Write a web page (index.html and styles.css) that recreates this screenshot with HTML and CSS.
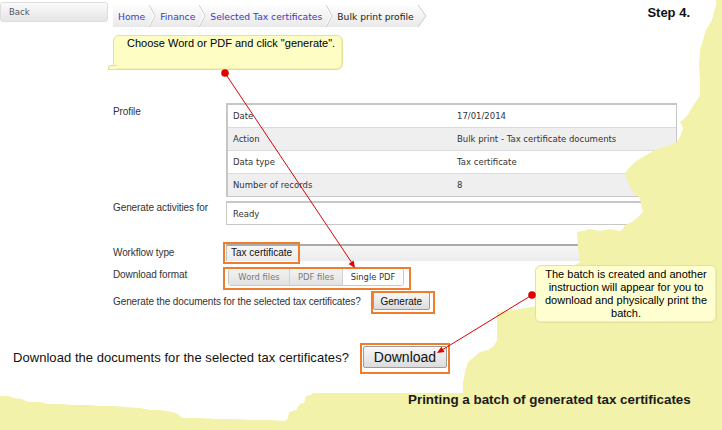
FILE: index.html
```html
<!DOCTYPE html>
<html lang="en">
<head>
<meta charset="utf-8">
<title>Bulk print profile</title>
<link rel="stylesheet" href="styles.css">
</head>
<body>
<div class="page">
  <header class="topbar">
    <button class="back" type="button">Back</button>
    <nav class="crumbs">
      <a class="crumb link">Home</a>
      <svg class="sep" width="7" height="22" viewBox="0 0 7 22"><polyline points="0,0 6,11 0,22" fill="none" stroke="#c9c9c9" stroke-width="1"/><polyline points="-1,0 5,11 -1,22" fill="none" stroke="#ffffff" stroke-width="1"/></svg>
      <a class="crumb link">Finance</a>
      <svg class="sep" width="7" height="22" viewBox="0 0 7 22"><polyline points="0,0 6,11 0,22" fill="none" stroke="#c9c9c9" stroke-width="1"/><polyline points="-1,0 5,11 -1,22" fill="none" stroke="#ffffff" stroke-width="1"/></svg>
      <a class="crumb link">Selected Tax certificates</a>
      <svg class="sep" width="7" height="22" viewBox="0 0 7 22"><polyline points="0,0 6,11 0,22" fill="none" stroke="#c9c9c9" stroke-width="1"/><polyline points="-1,0 5,11 -1,22" fill="none" stroke="#ffffff" stroke-width="1"/></svg>
      <span class="crumb current">Bulk print profile</span>
    </nav>
    <svg class="crumb-end" width="9" height="22" viewBox="0 0 9 22">
      <defs><linearGradient id="cg" x1="0" y1="0" x2="0" y2="1"><stop offset="0" stop-color="#fdfdfd"/><stop offset="1" stop-color="#e9e9e9"/></linearGradient></defs>
      <polygon points="0,0 8,11 0,22" fill="url(#cg)"/>
      <polyline points="0,0 8,11 0,22" fill="none" stroke="#c9c9c9" stroke-width="1"/>
    </svg>
    <div class="step">Step 4.</div>
  </header>

  <section class="form">
    <div class="row">
      <div class="label pad2">Profile</div>
      <div class="profile">
        <div class="prow"><span>Date</span><span>17/01/2014</span></div>
        <div class="prow alt"><span>Action</span><span>Bulk print - Tax certificate documents</span></div>
        <div class="prow"><span>Data type</span><span>Tax certificate</span></div>
        <div class="prow alt last"><span>Number of records</span><span>8</span></div>
      </div>
    </div>
    <div class="row activities">
      <div class="label">Generate activities for</div>
      <div class="box">Ready</div>
    </div>
    <div class="row workflow">
      <div class="label pad2">Workflow type</div>
      <div class="field">Tax certificate</div>
    </div>
    <div class="row format">
      <div class="label">Download format</div>
      <div class="seg">
        <span class="seg-item w1">Word files</span>
        <span class="seg-item w2">PDF files</span>
        <span class="seg-item w3 on">Single PDF</span>
      </div>
    </div>
    <div class="gen-row">
      <span class="label">Generate the documents for the selected tax certificates?</span>
      <button class="btn gen" type="button">Generate</button>
    </div>
  </section>

  <div class="download-row">
    <span class="dl-text">Download the documents for the selected tax certificates?</span>
    <button class="btn dl" type="button">Download</button>
  </div>

  <div class="caption">Printing a batch of generated tax certificates</div>

  <svg class="torn" width="722" height="430" viewBox="0 0 722 430">
    <polygon fill="#f2f2aa" points="716,0 722,0 722,430 0,430 0,396 8,396 14,398 22,399 28,402 40,402 48,404 62,404 70,405 90,405 100,406 115,406 125,407 140,408 150,410 160,410 172,412 178,414 182,418 200,418 215,419 235,419 250,420 270,420 285,421 288,418 289,412 296,410 300,404 304,403 306,396 311,395 313,393 463,393 463,382 465,372 468,362 474,357 480,352 488,350 494,346 497,340 497,312 520,309 536,306 560,275 580,262 578,248 577,232 583,231 590,229 600,231 610,229 620,231 623,229 625,225 632,222 637,218 643,212 641,205 640,198 634,193 630,187 627,180 625,173 630,167 635,162 641,158 648,154 655,150 660,148 668,146 677,142 680,137 683,128 680,122 685,118 688,114 693,106 697,100 700,95 700,80 699,65 700,50 703,40 706,30 709,25 712,20 714,12 716,5"/>
  </svg>

  <div class="hl hl-workflow"></div>
  <div class="hl hl-format"></div>
  <div class="hl hl-gen"></div>
  <div class="hl hl-dl"></div>

  <div class="callout c1">Choose Word or PDF and click "generate".</div>
  <div class="callout c2">The batch is created and another instruction will appear for you to download and physically print the batch.</div>

  <svg class="arrows" width="722" height="430" viewBox="0 0 722 430">
    <line x1="225" y1="73" x2="352" y2="263" stroke="#e00000" stroke-width="1"/>
    <circle cx="225" cy="73" r="3.8" fill="#e00000"/>
    <polygon points="355,268 348.6,263.9 353.6,260.6" fill="#e00000"/>
    <line x1="532" y1="295" x2="442" y2="350" stroke="#e00000" stroke-width="1"/>
    <circle cx="532" cy="295" r="3.8" fill="#e00000"/>
    <polygon points="437,353 441.4,346.8 444.5,351.9" fill="#e00000"/>
  </svg>
</div>
</body>
</html>
```

FILE: styles.css
```css
* { box-sizing: border-box; }
html, body { margin: 0; background: #fff; }

.page {
  position: relative;
  width: 722px;
  height: 430px;
  overflow: hidden;
  font-family: "Liberation Sans", Arial, sans-serif;
  color: #333;
}

/* top bar */
.topbar {
  display: flex;
  align-items: flex-start;
  height: 30px;
  padding-top: 2px;
}
.back {
  width: 108px;
  height: 20px;
  margin: 0;
  padding: 0 0 0 8px;
  text-align: left;
  border: 1px solid #dedede;
  border-radius: 3px;
  background: linear-gradient(#fbfbfb, #e5e5e5);
  font: 8.5px "DejaVu Sans", sans-serif;
  color: #555;
}
.crumbs {
  display: flex;
  align-items: center;
  height: 22px;
  margin: 3px 0 0 5px;
  padding-left: 1px;
  background: linear-gradient(#fdfdfd, #e9e9e9);
  font: 9.2px "DejaVu Sans", sans-serif;
}
.crumb { padding: 0 4px; white-space: nowrap; }
.crumb.link { color: #3a3ac8; }
.crumb.current { color: #222; }
.sep { display: block; flex: none; }
.crumb-end { display: block; flex: none; margin-top: 3px; }
.step {
  margin: 3px 32px 0 auto;
  font: bold 13px "Liberation Sans", Arial, sans-serif;
  color: #111;
}

/* form */
.form { padding: 73px 0 0 113px; }
.row {
  display: grid;
  grid-template-columns: 113px 451px;
  align-items: start;
}
.label {
  font-size: 10px;
  line-height: 13px;
  letter-spacing: -0.1px;
  color: #333;
}
.pad2 { padding-top: 2px; }

.profile {
  width: 451px;
  border: solid #c6c6c6;
  border-width: 2px 1px 1px 2px;
  font: 8.5px "DejaVu Sans", sans-serif;
  color: #333;
}
.prow {
  display: grid;
  grid-template-columns: 224px 1fr;
  align-items: center;
  height: 23px;
  padding-left: 5px;
  border-bottom: 1px solid #dcdcdc;
  background: #fff;
}
.prow.alt { background: #efefef; }
.prow.last { border-bottom: 0; height: 22px; }

.activities { margin-top: 4px; }
.box {
  height: 24px;
  border: 1px solid #c8c8c8;
  border-top-width: 2px;
  padding-left: 6px;
  display: flex;
  align-items: center;
  font: 8.5px "DejaVu Sans", sans-serif;
  color: #333;
}

.workflow { margin-top: 19px; }
.field {
  height: 17px;
  border-top: 2px solid #ababab;
  border-left: 1px solid #c0c0c0;
  background: linear-gradient(#f6f6f6, #ececec);
  padding-left: 4px;
  font-size: 10px;
  line-height: 14px;
  color: #111;
}

.format { margin-top: 7px; }
.seg {
  display: flex;
  width: max-content;
  height: 18px;
  margin-left: 2px;
  border: 1px solid #c8c8c8;
  border-radius: 3px;
  overflow: hidden;
  font: 8.4px "DejaVu Sans", sans-serif;
}
.seg-item {
  display: flex;
  align-items: center;
  justify-content: center;
  background: linear-gradient(#f3f3f3, #e2e2e2);
  color: #7a7a7a;
  border-left: 1px solid #d2d2d2;
}
.seg-item.w1 { width: 60px; border-left: 0; }
.seg-item.w2 { width: 53px; }
.seg-item.w3 { width: 61px; }
.seg-item.on { background: #fff; color: #333; }

.gen-row {
  display: flex;
  align-items: center;
  margin-top: 6px;
}
.btn {
  margin: 0;
  padding: 0;
  border: 1px solid #9c9c9c;
  border-radius: 2px;
  background: linear-gradient(#f8f8f8, #dcdcdc);
  font-family: "Liberation Sans", Arial, sans-serif;
  color: #111;
}
.gen {
  width: 57px;
  height: 18px;
  margin-left: 12px;
  font-size: 10px;
}

.download-row {
  display: flex;
  align-items: center;
  margin-top: 36px;
  padding-left: 13px;
}
.dl-text {
  font-size: 13px;
  letter-spacing: 0.05px;
  color: #111;
}
.dl {
  width: 84px;
  height: 22px;
  margin-left: 14px;
  font-size: 14px;
}

.caption {
  position: relative;
  z-index: 3;
  margin-top: 24px;
  padding-left: 408px;
  font: bold 13.4px "Liberation Sans", Arial, sans-serif;
  color: #1a1a1a;
}

/* overlays */
.torn {
  position: absolute;
  left: 0;
  top: 0;
  z-index: 2;
}
.hl {
  position: absolute;
  z-index: 3;
  border: 2px solid #ef7d2e;
}
.hl-workflow { left: 223px; top: 242px; width: 77px; height: 22px; }
.hl-format { left: 223px; top: 267px; width: 188px; height: 23px; }
.hl-gen { left: 371px; top: 291px; width: 64px; height: 23px; }
.hl-dl { left: 360px; top: 343px; width: 90px; height: 31px; }

.callout {
  position: absolute;
  z-index: 4;
  background: #fdfdc4;
  border: 1px solid #e2e29c;
  border-radius: 6px;
  box-shadow: inset -1px -1px 0 #f0f0b0;
  font: 11px "Liberation Sans", Arial, sans-serif;
  line-height: 13px;
  color: #000;
}
.c1 {
  left: 113px;
  top: 35px;
  width: 230px;
  height: 35px;
  padding: 1px 0 0 13px;
  border-bottom-left-radius: 0;
}
.c1::before {
  content: "";
  position: absolute;
  left: -6px;
  bottom: -1px;
  width: 8px;
  height: 3px;
  background: #fdfdc4;
  border: 1px solid #e2e29c;
  border-right: 0;
  border-radius: 3px 0 0 0;
}
.c2 {
  left: 535px;
  top: 265px;
  width: 182px;
  height: 58px;
  padding-top: 2px;
  text-align: center;
  background: #fefed0;
}
.arrows {
  position: absolute;
  left: 0;
  top: 0;
  z-index: 5;
  pointer-events: none;
}
```
